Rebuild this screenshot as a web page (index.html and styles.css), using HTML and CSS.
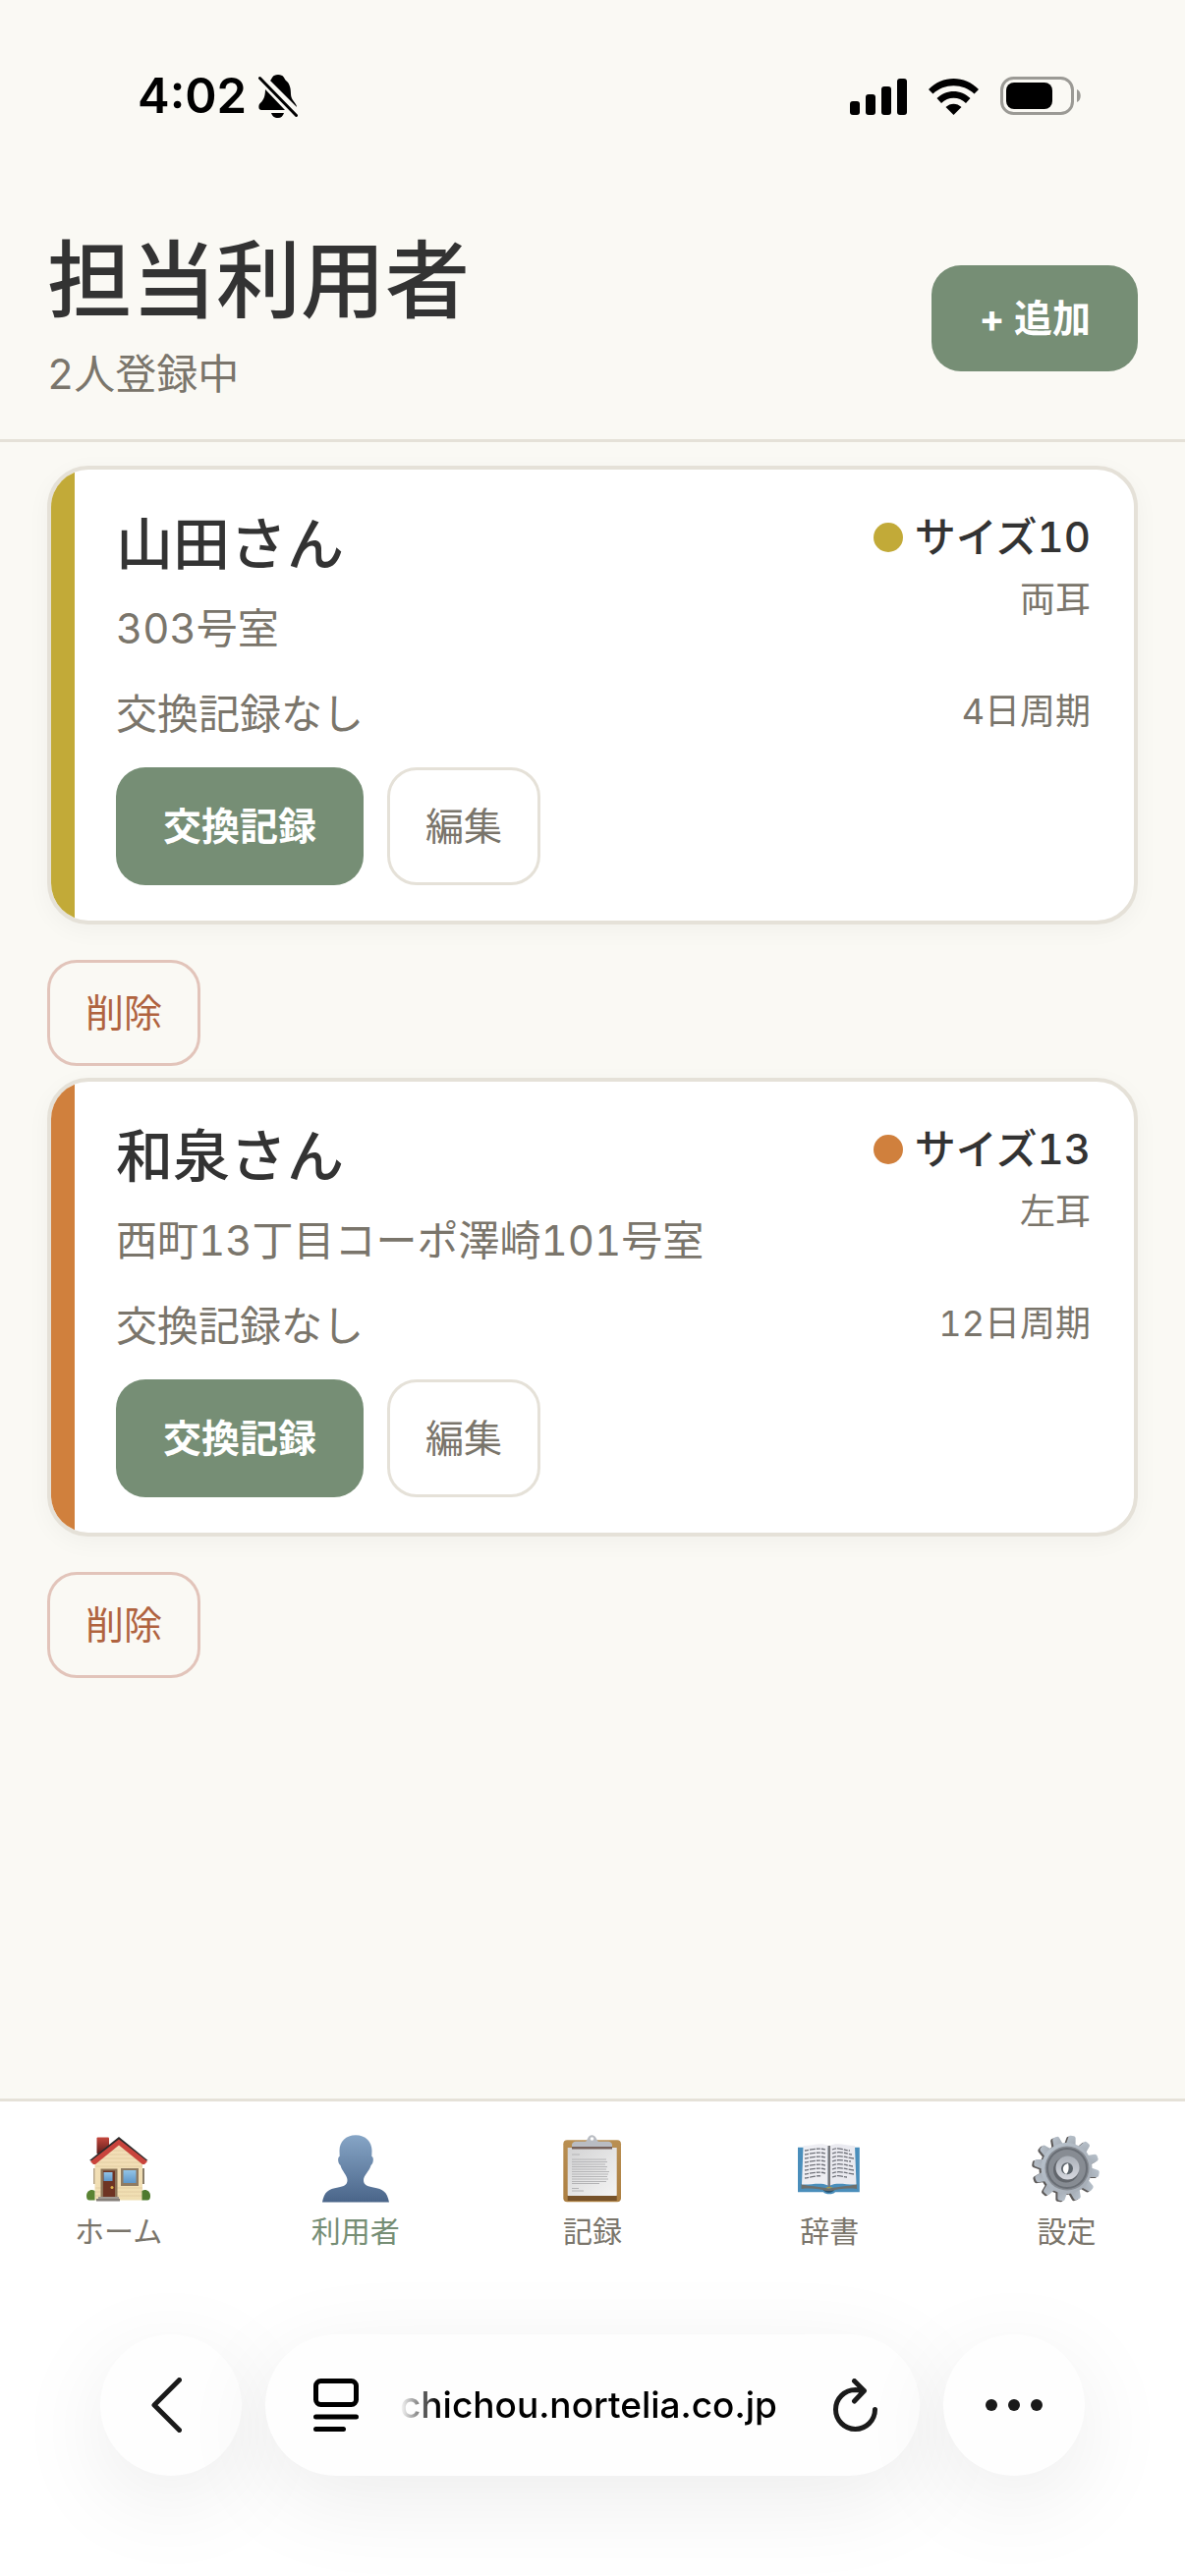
FILE: index.html
```html
<!DOCTYPE html>
<html lang="ja">
<head>
    <meta charset="UTF-8">
    <meta name="viewport" content="width=device-width, initial-scale=1.0">
    <title>担当利用者</title>
    <link rel="stylesheet" href="styles.css">
</head>
<body>
    <div class="status-bar">
        <div class="status-left">
            <span class="time">4:02</span>
            <svg class="bell" viewBox="0 0 40 44">
                <path d="M12 6 C14 4 14 0 20 0 C26 0 26 4 28 6 C32 9 33 14 33 20 C33 26 39 29 39 33 Z"/>
                <path d="M7 15 L27 36 H3 C0 36 0 32 1 30 C4 27 7 24 7 15 Z"/>
                <path d="M13 39 H26 C25 42 23 44 20 44 C16 44 14 42 13 39 Z"/>
                <path class="bell-slash" d="M1.5 3.5 L38.5 41.5"/>
            </svg>
        </div>
        <div class="status-right">
            <svg class="signal" viewBox="0 0 58 37">
                <rect x="0" y="23" width="10" height="14" rx="3"/>
                <rect x="16" y="16" width="10" height="21" rx="3"/>
                <rect x="32" y="8" width="10" height="29" rx="3"/>
                <rect x="48" y="0" width="10" height="37" rx="3"/>
            </svg>
            <svg class="wifi" viewBox="0 0 51 37">
                <path d="M0 11 C14 -3.6 37 -3.6 51 11 L46.500 15.500 C35 4.500 16 4.500 4.500 15.500 Z"/>
                <path d="M8.500 20 C18 10.500 33 10.500 42.500 20 L38 25 C31 18 20 18 13 25 Z"/>
                <path d="M17.500 29 C22 24.500 29 24.500 33.500 29 L25.500 37 Z"/>
            </svg>
            <svg class="battery" viewBox="0 0 83 40">
                <rect class="battery-case" x="1.500" y="1.500" width="72" height="36" rx="12"/>
                <rect x="6" y="6" width="47" height="27" rx="8"/>
                <path class="battery-tip" d="M78 13 C83 15 83 24 78 26 Z"/>
            </svg>
        </div>
    </div>

    <header class="header">
        <div>
            <h1>担当利用者</h1>
            <p class="count">2人登録中</p>
        </div>
        <button type="button" class="btn btn-primary">+ 追加</button>
    </header>

    <main class="list">
        <section class="card card-yellow">
            <div class="card-body">
                <div class="card-row">
                    <div>
                        <h2>山田さん</h2>
                        <p class="room">303号室</p>
                    </div>
                    <div class="card-side">
                        <p class="size"><span class="dot"></span>サイズ10</p>
                        <p class="small">両耳</p>
                    </div>
                </div>
                <div class="card-row card-record">
                    <p class="record">交換記録なし</p>
                    <p class="small">4日周期</p>
                </div>
                <div class="actions">
                    <button type="button" class="btn btn-primary">交換記録</button>
                    <button type="button" class="btn btn-outline">編集</button>
                </div>
            </div>
        </section>
        <button type="button" class="btn btn-delete">削除</button>

        <section class="card card-orange">
            <div class="card-body">
                <div class="card-row">
                    <div>
                        <h2>和泉さん</h2>
                        <p class="room">西町13丁目コーポ澤崎101号室</p>
                    </div>
                    <div class="card-side">
                        <p class="size"><span class="dot"></span>サイズ13</p>
                        <p class="small">左耳</p>
                    </div>
                </div>
                <div class="card-row card-record">
                    <p class="record">交換記録なし</p>
                    <p class="small">12日周期</p>
                </div>
                <div class="actions">
                    <button type="button" class="btn btn-primary">交換記録</button>
                    <button type="button" class="btn btn-outline">編集</button>
                </div>
            </div>
        </section>
        <button type="button" class="btn btn-delete">削除</button>
    </main>

    <nav class="tabs">
        <a class="tab" href="#home">
            <svg viewBox="0 0 72 72">
                <defs>
                    <linearGradient id="wall" x1="0" y1="0" x2="0" y2="1"><stop offset="0" stop-color="#f3deb8"/><stop offset="1" stop-color="#f0dfb2"/></linearGradient>
                    <linearGradient id="glass" x1="0" y1="0" x2="0" y2="1"><stop offset="0" stop-color="#92c3e6"/><stop offset="1" stop-color="#5f97c9"/></linearGradient>
                    <linearGradient id="brick" x1="0" y1="0" x2="0" y2="1"><stop offset="0" stop-color="#c4473d"/><stop offset="1" stop-color="#5c1d1a"/></linearGradient>
                </defs>
                <rect x="10" y="35" width="2" height="16" fill="#b7a68c"/>
                <rect x="60" y="35" width="2" height="16" fill="#8a7d68"/>
                <rect x="13.500" y="3.500" width="12.500" height="17" rx="1" fill="url(#brick)"/>
                <path d="M11.500 27 L36 8 L60 27 V67.500 H11.500 Z" fill="url(#wall)"/>
                <path d="M28 17 H44 M23 21 H49 M18 25 H54 M13 29 H59 M12 33 H60 M12 55 H60 M12 59 H60 M12 63 H60" stroke="#e2cda2" stroke-width="1"/>
                <path d="M6 27 L12 28 L36 9 L60 28 L65.500 27 L36 3 Z" fill="#2c2a2a"/>
                <path d="M7 28 L36 5.500 L65 28 L62 31 H60 L36 11.500 L12 31 H10 Z" fill="#c9443c"/>
                <rect x="17.500" y="35.500" width="17" height="30" fill="#8c7458"/>
                <rect x="20" y="37.500" width="12" height="28" fill="#6e3424"/>
                <rect x="20.500" y="39" width="9" height="9" fill="url(#glass)"/>
                <circle cx="29" cy="54.500" r="1.500" fill="#e0b34c"/>
                <rect x="15" y="64" width="21" height="2" fill="#a09a94"/>
                <rect x="13" y="66" width="24" height="2.500" fill="#857f7a"/>
                <rect x="38" y="35" width="18" height="18" fill="#8f7b62"/>
                <rect x="40.500" y="37" width="13" height="13" fill="url(#glass)"/>
                <path d="M3 63 C3 58 8 55.500 11.500 58 V67.500 H6 C4 67.500 3 66 3 63 Z" fill="#5a8433"/>
                <path d="M68 63 C68 58 63 55.500 59.500 58 V67.500 H65 C67 67.500 68 66 68 63 Z" fill="#4f7a2e"/>
            </svg>
            <span>ホーム</span>
        </a>
        <a class="tab tab-active" href="#users" aria-current="page">
            <svg viewBox="0 0 72 72">
                <defs>
                    <linearGradient id="bust" x1="0" y1="0" x2="0" y2="1"><stop offset="0" stop-color="#86a5c6"/><stop offset="1" stop-color="#4a6589"/></linearGradient>
                </defs>
                <path d="M36 1.300 C46 1.300 52.500 8 52.500 17 L52.300 23 C54.500 23 54.500 30 51.500 32 C50 38 44 42 44 47 C44 52 48 53.500 54 54.500 C64 56 68 59 70 69.500 H2 C4 59 8 56 18 54.500 C24 53.500 27.500 52 27.500 47 C27.500 42 22 38 20.500 32 C17.500 30 17.500 23 19.700 23 L19.500 17 C19.500 8 26 1.300 36 1.300 Z" fill="url(#bust)"/>
            </svg>
            <span>利用者</span>
        </a>
        <a class="tab" href="#records">
            <svg viewBox="0 0 72 72">
                <defs>
                    <linearGradient id="board" x1="0" y1="0" x2="0" y2="1"><stop offset="0" stop-color="#b98f52"/><stop offset="1" stop-color="#ac7f42"/></linearGradient>
                    <linearGradient id="paper" x1="0" y1="0" x2="1" y2="1"><stop offset="0" stop-color="#d3d3d4"/><stop offset="1" stop-color="#f4f4f4"/></linearGradient>
                </defs>
                <rect x="6.300" y="6.300" width="58.700" height="63" rx="4" fill="url(#board)"/>
                <rect x="10.700" y="62" width="50" height="6" fill="#76522a"/>
                <rect x="10.700" y="14" width="50" height="49" fill="url(#paper)"/>
                <path d="M15 21 H23 M15 26 H50 M15 28.500 H51 M15 31 H49 M15 33.500 H51 M15 36 H50 M15 38.500 H53 M15 41 H52 M15 43.500 H51 M15 46 H52 M15 48.500 H50 M15 50.500 H43 M15 55.500 H22 M15 58 H27" stroke="#b4b4b6" stroke-width="1"/>
                <path d="M15 15 V11 C15 9 17 7.700 19 7.700 H29 C31 7 31 1.300 35.300 1.300 C40 1.300 40 7 42 7.700 H52 C54 7.700 56 9 56 11 V15 Z" fill="#b9bcc2"/>
                <rect x="15" y="13" width="41" height="2.500" fill="#76625c"/>
                <circle cx="35.500" cy="5" r="1.800" fill="#ffffff"/>
            </svg>
            <span>記録</span>
        </a>
        <a class="tab" href="#dictionary">
            <svg viewBox="0 0 72 72">
                <path d="M4 13.700 H66.800 V59.300 H42 C40 62 32 62 30 59.300 H4 Z" fill="#4a8ebb"/>
                <path d="M29 56 C32 61 39 61 42 56 Z" fill="#24506e"/>
                <path d="M31 57 C34 54 38 54 41 57" fill="none" stroke="#b79b3a" stroke-width="1.500"/>
                <path d="M7.500 51 C16 54 28 53 35.500 56 C43 53 55 54 64 51 V56 C54 55 44 56 38 58 H33 C27 56 17 55 7.500 56 Z" fill="#6d6f6d"/>
                <path d="M9.500 12 C18 12 29 8 34.800 12 V52.500 C27 49 18 52 8 51.500 Z" fill="#eeeef3"/>
                <path d="M36.800 12 C43 8 54 12 62 12 L63.500 51.500 C54 52 44 49 36.800 52.500 Z" fill="#eaeaf0"/>
                <path d="M35.800 12 V54" stroke="#77787c" stroke-width="2.500"/>
                <path d="M11 17 C18 16 25 14 32 16 M11 21 C18 20 25 18 32 20 M11 25 C18 24 25 22 32 24 M11 29 C18 28 25 26 32 28 M11 33 C18 32 25 30 32 32 M11 37 C18 36 25 34 32 36 M11 41 C18 40 25 38 32 40 M11 45 C18 44 25 42 28 43 M39 16 C46 13 52 17 57 17 M39 20 C46 17 53 20 59 21 M39 24 C46 21 53 24 61 25 M39 28 C46 25 53 28 58 28 M39 32 C46 29 53 32 60 33 M39 36 C46 33 53 36 61 37 M39 40 C46 37 53 40 61 41 M39 44 C46 41 50 44 54 44" fill="none" stroke="#6f7179" stroke-width="1.300" stroke-dasharray="4 1 6 1"/>
            </svg>
            <span>辞書</span>
        </a>
        <a class="tab" href="#settings">
            <svg viewBox="0 0 72 72">
                <defs>
                    <linearGradient id="steel" x1="0" y1="0" x2="1" y2="1"><stop offset="0" stop-color="#b9c3cd"/><stop offset="1" stop-color="#a4abb4"/></linearGradient>
                    <linearGradient id="hub" x1="0" y1="0" x2="0" y2="1"><stop offset="0" stop-color="#aab0b8"/><stop offset="1" stop-color="#d6d8df"/></linearGradient>
                    <path id="tooth" d="M-5 -24 L-3.600 -32 Q-3 -33.500 -1.500 -33.500 H1.500 Q3 -33.500 3.600 -32 L5 -24 Z"/>
                    <g id="teeth">
                        <use href="#tooth" transform="rotate(15)"/>
                        <use href="#tooth" transform="rotate(45)"/>
                        <use href="#tooth" transform="rotate(75)"/>
                        <use href="#tooth" transform="rotate(105)"/>
                        <use href="#tooth" transform="rotate(135)"/>
                        <use href="#tooth" transform="rotate(165)"/>
                        <use href="#tooth" transform="rotate(195)"/>
                        <use href="#tooth" transform="rotate(225)"/>
                        <use href="#tooth" transform="rotate(255)"/>
                        <use href="#tooth" transform="rotate(285)"/>
                        <use href="#tooth" transform="rotate(315)"/>
                        <use href="#tooth" transform="rotate(345)"/>
                        <circle r="26"/>
                    </g>
                </defs>
                <use href="#teeth" transform="translate(34.500 36) rotate(-5)" fill="#5d5a59"/>
                <use href="#teeth" transform="translate(36.500 35) rotate(-5)" fill="url(#steel)"/>
                <circle cx="37" cy="35" r="22.500" fill="#878c93"/>
                <circle cx="37" cy="35" r="20" fill="none" stroke="#696e75" stroke-width="2"/>
                <circle cx="36" cy="36.500" r="13" fill="#62666c"/>
                <circle cx="37.500" cy="34.500" r="12" fill="url(#hub)"/>
                <circle cx="37" cy="35.300" r="6" fill="#5c646b"/>
                <path d="M38 30 C32 31 31 38 36 41 C39 39 39 33 38 30 Z" fill="#ffffff"/>
            </svg>
            <span>設定</span>
        </a>
    </nav>

    <div class="toolbar">
        <button type="button" class="round round-back" aria-label="戻る">
            <svg class="chevron" viewBox="0 0 31 56"><path d="M28.500 2.500 L3 28 L28.500 53.500"/></svg>
        </button>
        <div class="address">
            <button type="button" class="plain" aria-label="ページ設定">
                <svg class="reader" viewBox="0 0 46 54">
                    <rect x="2.500" y="2.500" width="41" height="24" rx="5"/>
                    <path d="M2.500 39 H43.500 M2.500 51.500 H30.500"/>
                </svg>
            </button>
            <input class="url" type="text" aria-label="アドレス" value="chichou.nortelia.co.jp">
            <button type="button" class="plain" aria-label="再読み込み">
                <svg class="reload" viewBox="0 0 45 54">
                    <path d="M42.500 31.500 A20 20 0 1 1 22.500 11.500 L31.500 12.500 M21.500 2.500 L31.500 12.500 L21.500 23"/>
                </svg>
            </button>
        </div>
        <button type="button" class="round" aria-label="その他">
            <svg class="more" viewBox="0 0 58 12"><circle cx="6" cy="6" r="6"/><circle cx="29" cy="6" r="6"/><circle cx="52" cy="6" r="6"/></svg>
        </button>
    </div>
</body>
</html>
```
FILE: styles.css
```css
* {
    box-sizing: border-box;
}

body {
    margin: 0;
    min-height: 100vh;
    display: flex;
    flex-direction: column;
    background: #faf9f4;
    color: #333333;
    font-family: 'Inter', 'Noto Sans CJK JP', sans-serif;
    font-variant-numeric: tabular-nums;
}

h1, h2, p {
    margin: 0;
}

button, input {
    font-family: inherit;
    margin: 0;
}

/* Status bar */
.status-bar {
    height: 198px;
    padding: 76px 105px 0 140px;
    display: flex;
    justify-content: space-between;
    align-items: flex-start;
}

.status-left, .status-right {
    height: 44px;
    display: flex;
    align-items: center;
}

.status-left {
    gap: 12px;
}

.status-right {
    gap: 22px;
}

.time {
    font-size: 49px;
    font-weight: 600;
    font-variant-numeric: normal;
    line-height: 44px;
    color: #000000;
}

.bell {
    width: 40px;
    height: 44px;
}

.bell-slash {
    stroke: #000000;
    stroke-width: 3;
    stroke-linecap: round;
}

.signal {
    width: 58px;
    height: 37px;
}

.wifi {
    width: 51px;
    height: 37px;
}

.battery {
    width: 83px;
    height: 40px;
}

.battery-case {
    fill: none;
    stroke: #9b9a95;
    stroke-width: 3;
}

.battery-tip {
    fill: #9b9a95;
}

/* Header */
.header {
    display: flex;
    justify-content: space-between;
    align-items: center;
    padding: 36px 48px 33px;
    border-bottom: 3px solid #e5e1d8;
}

h1 {
    font-size: 86px;
    font-weight: 500;
    line-height: 105px;
}

.count {
    margin-top: 9px;
    font-size: 42px;
    line-height: 66px;
    color: #7a756b;
}

/* Buttons */
.btn {
    height: 108px;
    padding: 0 36px;
    border: 3px solid #e5e1d8;
    border-radius: 30px;
    background: transparent;
    color: #7a756b;
    font-size: 39px;
    line-height: 60px;
}

.btn-primary {
    padding: 0 48px;
    border: none;
    background: #768e75;
    color: #ffffff;
    font-weight: 700;
}

.btn-delete {
    align-self: flex-start;
    margin-bottom: 12px;
    border-color: #e2c4ba;
    color: #b0633f;
}

/* Cards */
.list {
    flex: 1;
    display: flex;
    flex-direction: column;
    padding: 24px 48px;
}

.card {
    display: flex;
    margin-bottom: 36px;
    border: 4px solid #e5e1d8;
    border-radius: 42px;
    background: #ffffff;
    overflow: hidden;
    box-shadow: 0 6px 24px rgba(0, 0, 0, 0.04);
}

.card::before {
    content: "";
    width: 24px;
    background: #c2aa38;
}

.card-orange::before {
    background: #d0803d;
}

.card-body {
    flex: 1;
    padding: 36px 44px 36px 42px;
}

.card-row {
    display: flex;
    justify-content: space-between;
    align-items: flex-start;
}

.card-record {
    margin: 21px 0;
}

h2 {
    font-size: 58px;
    font-weight: 500;
    line-height: 81px;
}

.room {
    margin-top: 12px;
}

.room, .record {
    font-size: 42px;
    line-height: 66px;
    color: #7a756b;
}

.card-side {
    text-align: right;
}

.size {
    display: flex;
    align-items: center;
    gap: 12px;
    font-size: 42px;
    font-weight: 500;
    line-height: 66px;
}

.dot {
    width: 30px;
    height: 30px;
    border-radius: 50%;
    background: #c2aa38;
}

.card-orange .dot {
    background: #d0803d;
}

.small {
    font-size: 36px;
    line-height: 60px;
    color: #7a756b;
}

.actions {
    display: flex;
    gap: 24px;
}

.actions .btn {
    height: 120px;
}

/* Bottom tabs */
.tabs {
    display: flex;
    padding-top: 33px;
    border-top: 3px solid #e5e1d8;
    background: #ffffff;
}

.tab {
    flex: 1;
    display: flex;
    flex-direction: column;
    align-items: center;
    gap: 6px;
    font-size: 30px;
    line-height: 42px;
    color: #7a756b;
    text-decoration: none;
}

.tab svg {
    width: 72px;
    height: 72px;
}

.tab-active {
    color: #768e75;
}

/* Browser toolbar */
.toolbar {
    display: flex;
    gap: 24px;
    padding: 84px 102px 102px;
    background: #ffffff;
}

.round, .address {
    height: 144px;
    border: none;
    border-radius: 72px;
    background: #fefefe;
    box-shadow: 0 24px 96px rgba(0, 0, 0, 0.08);
}

.round {
    width: 144px;
    padding: 0;
    display: flex;
    align-items: center;
    justify-content: center;
}

.round-back {
    padding-right: 9px;
}

.address {
    flex: 1;
    min-width: 0;
    display: flex;
    align-items: center;
    padding: 0 43px 0 49px;
}

.plain {
    display: flex;
    padding: 0;
    border: none;
    background: none;
}

.url {
    flex: 1;
    min-width: 0;
    padding: 0 0 0 42px;
    border: none;
    background: none;
    color: #000000;
    font-family: 'Inter', sans-serif;
    font-size: 37px;
    font-weight: 500;
    line-height: 48px;
    -webkit-mask-image: linear-gradient(to right, transparent 42px, #000000 81px);
    mask-image: linear-gradient(to right, transparent 42px, #000000 81px);
}

.chevron, .reader, .reload {
    fill: none;
    stroke: #1a1a1a;
    stroke-width: 5;
    stroke-linecap: round;
    stroke-linejoin: round;
}

.chevron {
    width: 31px;
    height: 56px;
}

.reader {
    width: 46px;
    height: 54px;
    stroke: #000000;
}

.reload {
    width: 45px;
    height: 54px;
}

.more {
    width: 58px;
    height: 12px;
    fill: #1a1a1a;
}
```
